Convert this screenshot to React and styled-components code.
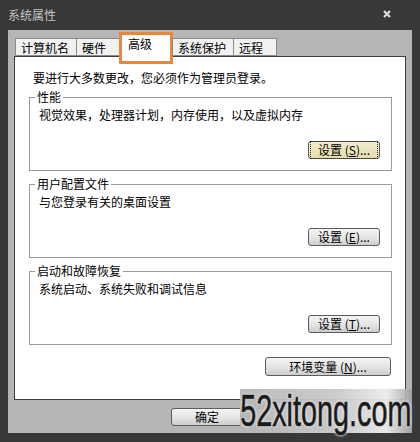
import styled, { createGlobalStyle } from "styled-components";

const Global = createGlobalStyle`
    body {
        margin: 0;
        background: #383838;
        font-family: "Noto Sans CJK SC", "DejaVu Sans", sans-serif;
    }
`

export default function App () {

    let groups = [
        { title: "性能", text: "视觉效果，处理器计划，内存使用，以及虚拟内存", key: "S", focus: true },
        { title: "用户配置文件", text: "与您登录有关的桌面设置", key: "E" },
        { title: "启动和故障恢复", text: "系统启动、系统失败和调试信息", key: "T" },
    ];

    let tabs = ["计算机名", "硬件", "高级", "系统保护", "远程"];

    return (
        <Window>
            <Global />
            <TitleBar>
                <span>系统属性</span>
                <svg width="8" height="8" viewBox="0 0 8 8">
                    <path d="M1 1 L7 7 M7 1 L1 7" stroke="#dcdcdc" strokeWidth="2.2" />
                </svg>
            </TitleBar>
            <Client>
                <Tabs>
                    {tabs.map((t) => (
                        <Tab key={t} active={t === "高级"}>
                            {t}
                            {t === "高级" && <Highlight />}
                        </Tab>
                    ))}
                </Tabs>
                <Panel>
                    <Intro>要进行大多数更改，您必须作为管理员登录。</Intro>
                    {groups.map((g) => (
                        <Group key={g.key}>
                            <legend>{g.title}</legend>
                            <div className="text">{g.text}</div>
                            <ButtonRow>
                                <Button focus={g.focus}>
                                    <span>设置 (<u>{g.key}</u>)...</span>
                                </Button>
                            </ButtonRow>
                        </Group>
                    ))}
                    <EnvRow>
                        <Button wide>环境变量 (<u>N</u>)...</Button>
                    </EnvRow>
                </Panel>
                <Footer>
                    <Button>确定</Button>
                    <Button />
                </Footer>
                <Watermark>
                    <span>52xitong.com</span>
                </Watermark>
            </Client>
        </Window>
    )
}

const Window = styled.div`
    width: 420px;
    height: 442px;
    background: #383838;
    overflow: hidden;
`

const TitleBar = styled.div`
    height: 30px;
    display: flex;
    align-items: center;
    justify-content: space-between;
    padding: 0 29px 2px 8px;
    box-sizing: border-box;
    color: #c4c4c4;
    font-size: 12px;
`

const Client = styled.div`
    position: relative;
    margin: 0 8px;
    height: 403px;
    box-sizing: border-box;
    background: #b5b5b5;
    padding: 8px 6px 0 6px;
`

const Tabs = styled.div`
    display: flex;
    align-items: flex-end;
    padding-left: 2px;
    height: 18px;
    position: relative;
    z-index: 2;
`

const Tab = styled.div`
    position: relative;
    box-sizing: border-box;
    min-width: ${(p) => (p.active ? "54px" : "44px")};
    height: ${(p) => (p.active ? "23px" : "18px")};
    margin-bottom: ${(p) => (p.active ? "-1px" : "0")};
    padding: ${(p) => (p.active ? "1px 8px 0 8px" : "1px 7px 0 5px")};
    background: ${(p) => (p.active ? "#ffffff" : "#f1f1f1")};
    border: 1px solid #8a8a8a;
    border-bottom: ${(p) => (p.active ? "none" : "1px solid #8a8a8a")};
    margin-left: -1px;
    font-size: 12px;
    line-height: 15px;
    color: #000;
    white-space: nowrap;
`

const Highlight = styled.div`
    position: absolute;
    left: -1px;
    right: -1px;
    top: -3px;
    bottom: -7px;
    border: 3px solid #e9883c;
    pointer-events: none;
`

const Panel = styled.div`
    height: 344px;
    box-sizing: border-box;
    background: #ffffff;
    border: 1px solid #3e3e3e;
    padding: 14px 13px 0 14px;
    display: flex;
    flex-direction: column;
`

const Intro = styled.div`
    font-size: 12px;
    line-height: 14px;
    padding-left: 4px;
    margin-bottom: 5px;
    color: #000;
`

const Group = styled.fieldset`
    margin: 0 0 6px 0;
    padding: 4px 11px 11px 8px;
    border: 1px solid #9a9a9a;
    font-size: 12px;
    line-height: 14px;
    color: #000;

    legend {
        padding: 0 2px;
        margin-left: -3px;
        font-size: 12px;
        line-height: 14px;
    }

    .text {
        padding-left: 1px;
    }
`

const ButtonRow = styled.div`
    display: flex;
    justify-content: flex-end;
    margin-top: 19px;
`

const Button = styled.div`
    box-sizing: border-box;
    width: ${(p) => (p.wide ? "126px" : "72px")};
    height: ${(p) => (p.wide ? "19px" : "18px")};
    display: flex;
    align-items: center;
    justify-content: center;
    border: 1px solid #5c5c5c;
    border-radius: 3px;
    background: ${(p) => (p.focus
        ? "linear-gradient(#f3edcf, #e6dcaa)"
        : "linear-gradient(#f4f4f4 0%, #e6e6e6 50%, #cdcdcd 100%)")};
    font-size: 12px;
    line-height: 14px;
    color: #000;
    white-space: nowrap;

    span {
        padding: 0 6px;
        outline: ${(p) => (p.focus ? "1px dotted #333" : "none")};
        outline-offset: 1px;
    }
`

const EnvRow = styled.div`
    display: flex;
    justify-content: flex-end;
    margin-top: 6px;
    padding-right: 1px;
`

const Footer = styled.div`
    display: flex;
    gap: 6px;
    margin-top: 8px;
    padding-left: 157px;
`

const Watermark = styled.div`
    position: absolute;
    left: 232px;
    right: 0;
    bottom: 0;
    height: 44px;
    display: flex;
    align-items: center;
    justify-content: center;
    background: linear-gradient(90deg, rgba(181,181,181,0.92) 0%, rgba(200,200,200,0.95) 55%, rgba(235,235,235,0.95) 85%, rgba(160,160,160,0.9) 100%);

    span {
        display: inline-block;
        font-family: "Liberation Sans", "DejaVu Sans", sans-serif;
        font-size: 45px;
        line-height: 44px;
        color: #1a1a1a;
        transform: scaleX(0.64);
        white-space: nowrap;
        -webkit-text-stroke: 0.6px #1a1a1a;
        text-shadow: 0 0 2px #eee, 0 0 4px #fff, 0 0 4px #bbb;
    }
`
